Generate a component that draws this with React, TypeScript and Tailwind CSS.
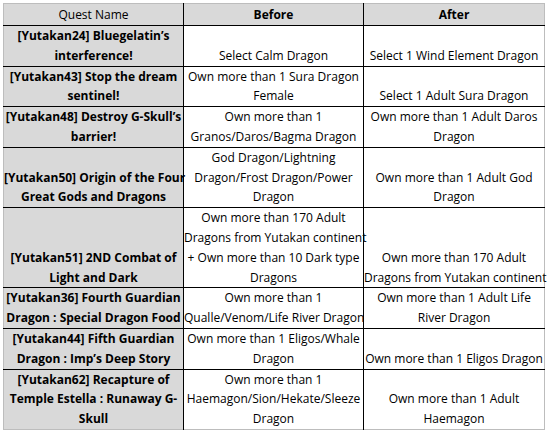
const rows: { name: string[]; before: string[]; after: string[] }[] = [
  { name: ["[Yutakan24] Bluegelatin’s", "interference!"], before: ["Select Calm Dragon"], after: ["Select 1 Wind Element Dragon"] },
  { name: ["[Yutakan43] Stop the dream", "sentinel!"], before: ["Own more than 1 Sura Dragon", "Female"], after: ["Select 1 Adult Sura Dragon"] },
  { name: ["[Yutakan48] Destroy G-Skull’s", "barrier!"], before: ["Own more than 1", "Granos/Daros/Bagma Dragon"], after: ["Own more than 1 Adult Daros", "Dragon"] },
  { name: ["[Yutakan50] Origin of the Four", "Great Gods and Dragons"], before: ["God Dragon/Lightning", "Dragon/Frost Dragon/Power", "Dragon"], after: ["Own more than 1 Adult God", "Dragon"] },
  { name: ["[Yutakan51] 2ND Combat of", "Light and Dark"], before: ["Own more than 170 Adult", "Dragons from Yutakan continent", "+ Own more than 10 Dark type", "Dragons"], after: ["Own more than 170 Adult", "Dragons from Yutakan continent"] },
  { name: ["[Yutakan36] Fourth Guardian", "Dragon : Special Dragon Food"], before: ["Own more than 1", "Qualle/Venom/Life River Dragon"], after: ["Own more than 1 Adult Life", "River Dragon"] },
  { name: ["[Yutakan44] Fifth Guardian", "Dragon : Imp’s Deep Story"], before: ["Own more than 1 Eligos/Whale", "Dragon"], after: ["Own more than 1 Eligos Dragon"] },
  { name: ["[Yutakan62] Recapture of", "Temple Estella : Runaway G-", "Skull"], before: ["Own more than 1", "Haemagon/Sion/Hekate/Sleeze", "Dragon"], after: ["Own more than 1 Adult", "Haemagon"] },
];

const Lines = ({ lines }: { lines: string[] }) => (
  <>
    {lines.map((l, i) => (
      <div key={i} className="whitespace-nowrap">{l}</div>
    ))}
  </>
);

export default function App() {
  return (
    <div className="bg-white w-[547px] h-[435px] p-[3px] font-['Open_Sans','Noto_Sans_CJK_KR',sans-serif] text-[12px] leading-[19.8px] text-black">
      <table className="table-fixed border-collapse w-[541px] border border-[#bdbdbd]">
        <colgroup>
          <col className="w-[180px]" />
          <col className="w-[180px]" />
          <col className="w-[181px]" />
        </colgroup>
        <thead>
          <tr className="bg-[#d9d9d9] h-[22px]">
            <th className="font-normal border-b border-r border-black text-center">Quest Name</th>
            <th className="font-bold border-b border-r border-black text-center">Before</th>
            <th className="font-bold border-b border-black text-center">After</th>
          </tr>
        </thead>
        <tbody>
          {rows.map((r, i) => (
            <tr key={i}>
              <td className="bg-[#d9d9d9] font-bold align-bottom text-center border-t border-r border-black p-0">
                <Lines lines={r.name} />
              </td>
              <td className="align-bottom text-center border-t border-r border-black p-0">
                <Lines lines={r.before} />
              </td>
              <td className="align-bottom text-center border-t border-black p-0">
                <Lines lines={r.after} />
              </td>
            </tr>
          ))}
        </tbody>
      </table>
    </div>
  );
}
